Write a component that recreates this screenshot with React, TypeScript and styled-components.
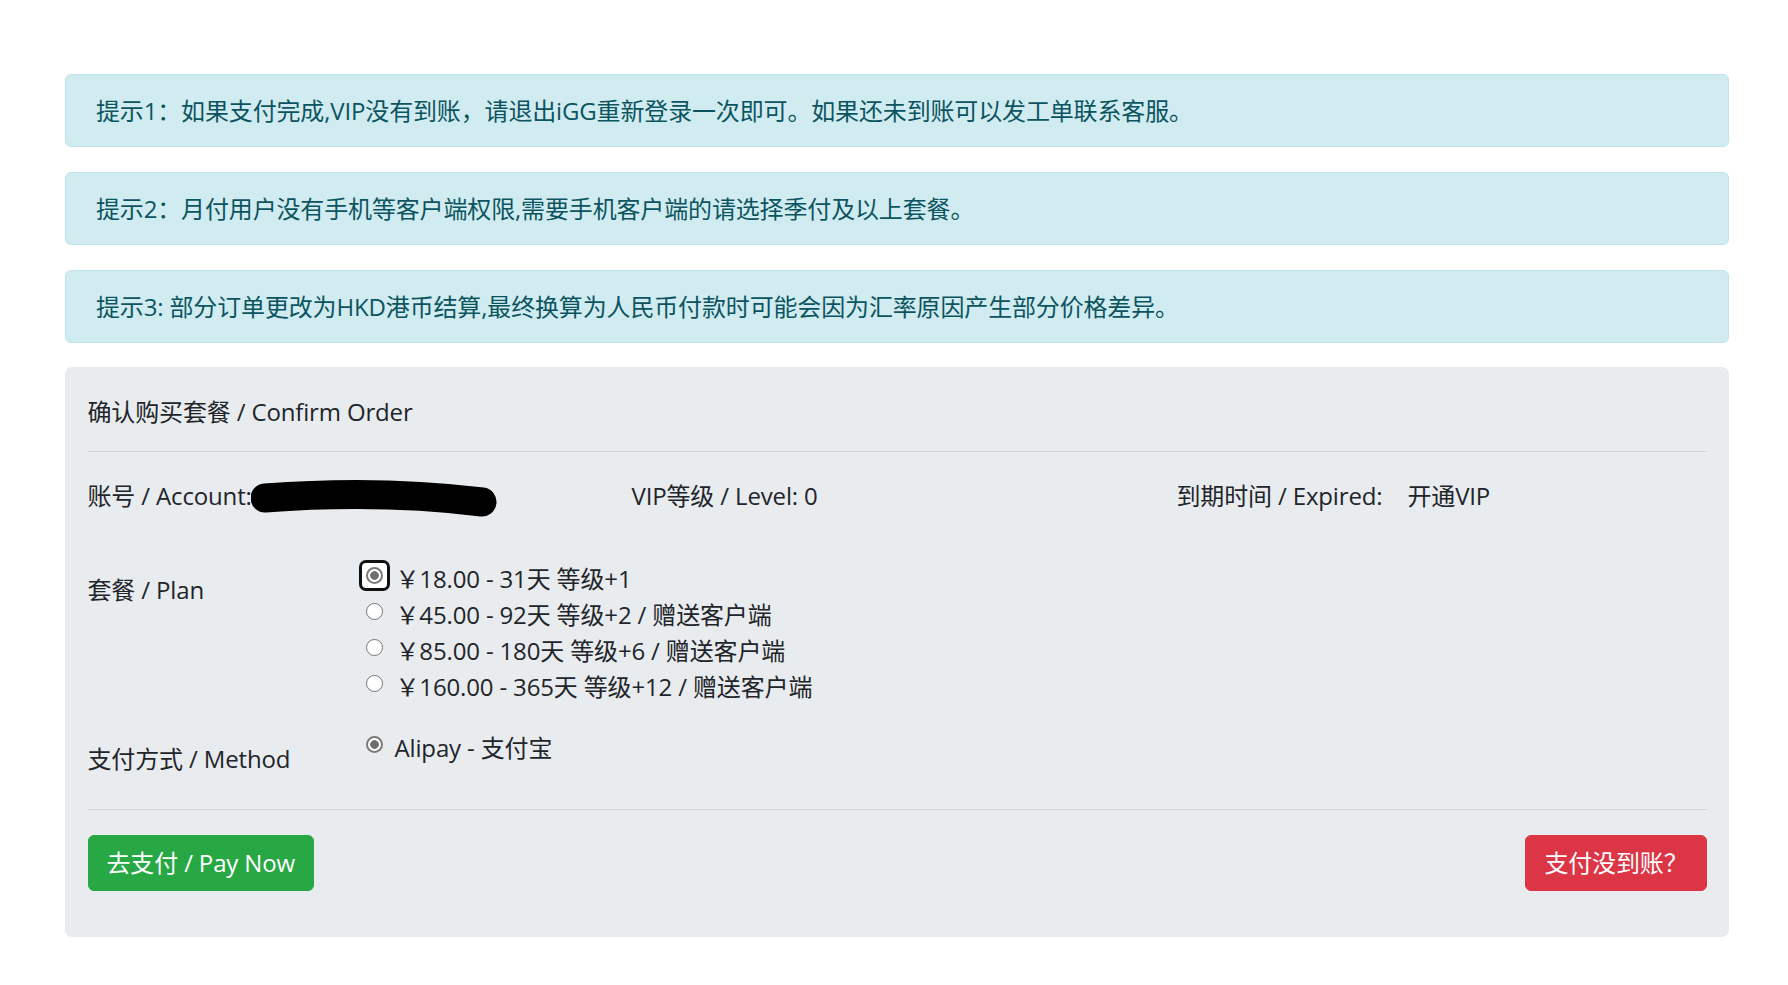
import styled, { createGlobalStyle } from "styled-components";

const GlobalStyle = createGlobalStyle`
  html, body {
    margin: 0;
    padding: 0;
    background: #fff;
  }

  body {
    font-family: "Open Sans", "Noto Sans CJK SC", sans-serif;
    font-size: 24px;
    line-height: 36px;
    letter-spacing: -0.15px;
    color: #212529;
  }
`;

const plans = [
  { id: "p1", text: "￥18.00 - 31天 等级+1" },
  { id: "p2", text: "￥45.00 - 92天 等级+2 / 赠送客户端" },
  { id: "p3", text: "￥85.00 - 180天 等级+6 / 赠送客户端" },
  { id: "p4", text: "￥160.00 - 365天 等级+12 / 赠送客户端" },
];

const tips = [
  "提示1：如果支付完成,VIP没有到账，请退出iGG重新登录一次即可。如果还未到账可以发工单联系客服。",
  "提示2：月付用户没有手机等客户端权限,需要手机客户端的请选择季付及以上套餐。",
  "提示3: 部分订单更改为HKD港币结算,最终换算为人民币付款时可能会因为汇率原因产生部分价格差异。",
];

const App = () => {
  return (
    <>
      <GlobalStyle />
      <Page>
        {tips.map((tip) => (
          <Alert key={tip}>{tip}</Alert>
        ))}

        <Card>
          <Title>确认购买套餐 / Confirm Order</Title>
          <Divider $top={21} $bottom={26} />

          <InfoRow>
            <InfoCell>
              账号 / Account:
              <Redacted viewBox="0 0 246 40" aria-hidden="true">
                <path
                  d="M14 20 C 80 15, 150 14, 231 24"
                  fill="none"
                  stroke="#000"
                  strokeWidth="29"
                  strokeLinecap="round"
                />
              </Redacted>
            </InfoCell>
            <InfoCell>VIP等级 / Level: 0</InfoCell>
            <InfoCell>
              到期时间 / Expired:
              <InfoValue>开通VIP</InfoValue>
            </InfoCell>
          </InfoRow>

          <FormRow $bottom={25}>
            <FieldLabel>套餐 / Plan</FieldLabel>
            <OptionList>
              {plans.map((plan, i) => (
                <Option key={plan.id}>
                  <RadioSlot $focused={i === 0}>
                    <Radio name="plan" defaultChecked={i === 0} />
                  </RadioSlot>
                  <OptionText>{plan.text}</OptionText>
                </Option>
              ))}
            </OptionList>
          </FormRow>

          <FormRow $bottom={0}>
            <FieldLabel>支付方式 / Method</FieldLabel>
            <OptionList>
              <Option>
                <RadioSlot>
                  <Radio name="method" defaultChecked />
                </RadioSlot>
                <OptionText $shift={-1}>Alipay - 支付宝</OptionText>
              </Option>
            </OptionList>
          </FormRow>

          <Divider $top={22} $bottom={25} />

          <Footer>
            <Button $variant="success">去支付 / Pay Now</Button>
            <Button $variant="danger">支付没到账？</Button>
          </Footer>
        </Card>
      </Page>
    </>
  );
};

const Page = styled.main`
  padding: 74px 59px 49px 65px;
`;

const Alert = styled.div`
  padding: 17.5px 30px;
  margin-bottom: 25px;
  background-color: #d1ecf1;
  border: 1px solid #bee5eb;
  border-radius: 6px;
  color: #0c5460;
  white-space: nowrap;
`;

const Card = styled.section`
  margin-top: -1px;
  padding: 27px 22.5px 46px;
  background-color: #e9ecef;
  border-radius: 7px;
`;

const Title = styled.h4`
  margin: 0;
  font-size: 24px;
  font-weight: 400;
  line-height: 36px;
`;

const Divider = styled.hr<{ $top: number; $bottom: number }>`
  margin: ${(p) => p.$top}px 0 ${(p) => p.$bottom}px;
  border: 0;
  border-top: 1px solid rgba(0, 0, 0, 0.1);
`;

const InfoRow = styled.div`
  display: grid;
  grid-template-columns: 544px 545px 1fr;
  margin-bottom: 47px;
`;

const InfoCell = styled.div`
  display: flex;
  align-items: center;
  height: 36px;
  white-space: nowrap;
`;

const InfoValue = styled.span`
  margin-left: 25px;
`;

const Redacted = styled.svg`
  flex: none;
  width: 246px;
  height: 40px;
  margin: -2px 0 -2px -1px;
  transform: translateY(2px);
`;

const FormRow = styled.div<{ $bottom: number }>`
  display: grid;
  grid-template-columns: 278px 1fr;
  margin-bottom: ${(p) => p.$bottom}px;
`;

const FieldLabel = styled.label`
  padding: 11px 0 10px;
  line-height: 36px;
`;

const OptionList = styled.div`
  display: flex;
  flex-direction: column;
`;

const Option = styled.label`
  display: flex;
  align-items: flex-start;
  gap: 13px;
  line-height: 36px;
  white-space: nowrap;
`;

const RadioSlot = styled.span<{ $focused?: boolean }>`
  position: relative;
  display: flex;
  margin-top: 6px;

  &::before {
    content: "";
    display: ${(p) => (p.$focused ? "block" : "none")};
    position: absolute;
    left: -7px;
    top: -7px;
    right: -7px;
    bottom: -7px;
    border: 3px solid #111;
    border-radius: 7px;
    background: #fff;
  }
`;

const Radio = styled.input.attrs({ type: "radio" })`
  position: relative;
  appearance: none;
  width: 17px;
  height: 17px;
  margin: 0;
  border: 1px solid #767676;
  border-radius: 50%;
  background: #fff;

  &:checked {
    border: 2px solid #7a7a7a;
    background: radial-gradient(circle, #6f6f6f 0 4px, #fff 4.6px);
  }
`;

const OptionText = styled.span<{ $shift?: number }>`
  margin-left: ${(p) => p.$shift ?? 0}px;
`;

const Footer = styled.div`
  display: flex;
  justify-content: space-between;
  align-items: center;
`;

const Button = styled.button<{ $variant: "success" | "danger" }>`
  padding: 9px 18px;
  border: 1px solid ${(p) => (p.$variant === "success" ? "#28a745" : "#dc3545")};
  border-radius: 6px;
  background-color: ${(p) => (p.$variant === "success" ? "#28a745" : "#dc3545")};
  color: #fff;
  font-family: inherit;
  font-size: 24px;
  line-height: 36px;
  letter-spacing: inherit;
  cursor: pointer;
`;

export default App;
